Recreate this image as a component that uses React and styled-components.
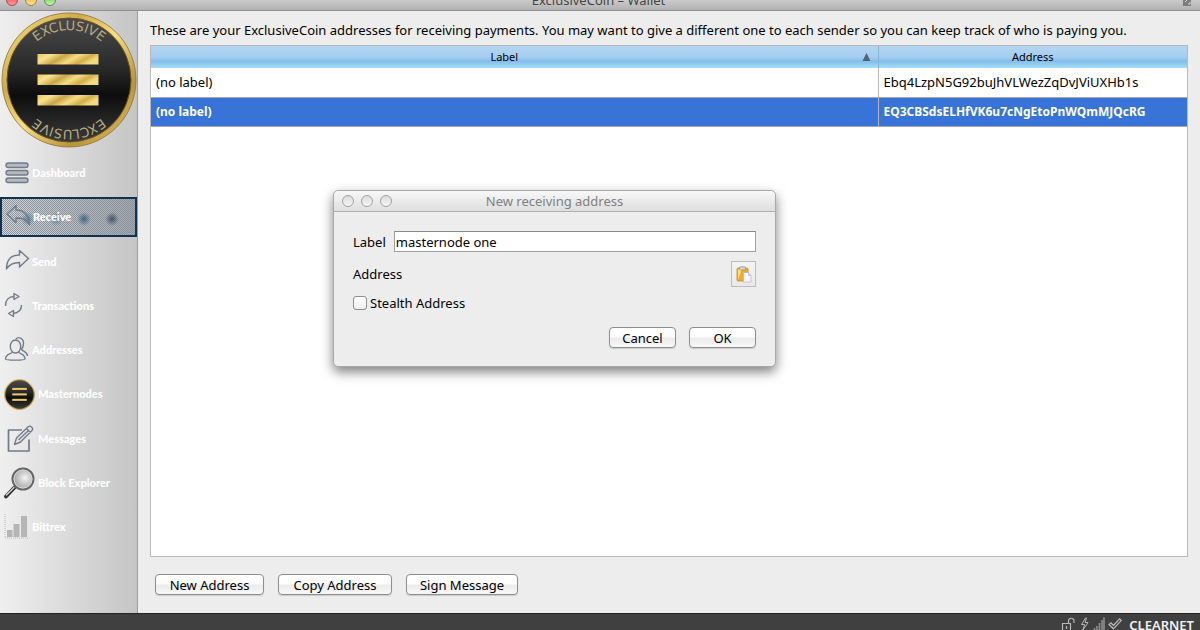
import React, { useState } from "react";
import styled, { createGlobalStyle } from "styled-components";

const GlobalStyle = createGlobalStyle`
  * {
    box-sizing: border-box;
  }

  body {
    margin: 0;
    background: #ededed;
    color: #000;
    font-family: "Noto Sans", "Open Sans", sans-serif;
    font-size: 13px;
    line-height: 18px;
  }

  button,
  input {
    font: inherit;
    color: inherit;
  }
`;

const Window = styled.div`
  position: relative;
  display: grid;
  grid-template-rows: auto 1fr auto;
  min-height: 100vh;
`;

const TitleBar = styled.header`
  display: flex;
  flex-direction: column;
  justify-content: flex-end;
  height: 11px;
  overflow: hidden;
  background: linear-gradient(#cbcbcb, #b2b2b2);
  border-bottom: 1px solid #8f8f8f;
`;

const TitleRow = styled.div`
  display: grid;
  grid-template-columns: 1fr auto 1fr;
  align-items: center;
  flex: none;
  height: 20px;
  padding: 0 9px 0 6px;
`;

const Lights = styled.div`
  display: flex;
  gap: 7px;
`;

const Light = styled.span`
  width: 12px;
  height: 12px;
  border: 1px solid ${({ $edge }) => $edge};
  border-radius: 50%;
  background: ${({ $fill }) => $fill};
`;

const Title = styled.h1`
  margin: 0;
  color: #444;
  font-size: 13px;
  font-weight: 400;
  line-height: 18px;
`;

const ExpandIcon = styled.svg`
  justify-self: end;
  display: block;
`;

const Body = styled.div`
  display: grid;
  grid-template-columns: 138px minmax(0, 1fr);
`;

const Sidebar = styled.aside`
  display: flex;
  flex-direction: column;
  padding-bottom: 66px;
  background: linear-gradient(90deg, #efefef, #c5c5c5);
  border-right: 1px solid #a0a0a0;
`;

const LogoBox = styled.div`
  height: 142px;
  padding: 1px;
`;

const Nav = styled.nav`
  display: flex;
  flex: 1;
  flex-direction: column;
  justify-content: space-between;
`;

const NavLink = styled.a`
  display: flex;
  align-items: center;
  gap: ${({ $wide }) => ($wide ? "3px" : "2px")};
  height: 40px;
  padding-left: 4px;
  color: #fff;
  font-family: Lato, sans-serif;
  font-size: 11px;
  font-weight: 900;
  text-decoration: none;

  svg {
    flex: none;
  }
`;

const ActiveLink = styled(NavLink)`
  padding-left: 3px;
  border: 2px solid #103450;
  background:
    radial-gradient(circle at 82px 20px, #2a5578cc 0, transparent 7px),
    radial-gradient(circle at 110px 20px, #2a4058cc 0, transparent 7px),
    radial-gradient(circle at 54px 20px, #4a789ccc 0, transparent 7px),
    radial-gradient(circle at 26px 20px, #4a789ccc 0, transparent 7px),
    repeating-conic-gradient(#8a939b 0 25%, transparent 0 50%) 0 0 / 2px 2px,
    linear-gradient(90deg, #d6dadd, #a2a7ae);
`;

const Main = styled.main`
  display: flex;
  flex-direction: column;
  padding: 10px 12px 18px;
`;

const Intro = styled.p`
  margin: 0 0 6px;
  white-space: nowrap;
`;

const TablePanel = styled.div`
  flex: 1;
  border: 1px solid #b8b8b8;
  background: #fff;
`;

const AddressTable = styled.table`
  width: 100%;
  border-collapse: collapse;
  table-layout: fixed;
`;

const HeadCell = styled.th`
  width: ${({ $width }) => $width || "auto"};
  height: 22px;
  padding: 0 7px;
  border-right: 1px solid #8db4cf;
  background: linear-gradient(#b3d5f1, #a5ceef 50%, #82beeb 70%, #a9dcf9);
  font-size: 11px;
  font-weight: 400;

  &:last-child {
    border-right: 0;
  }
`;

const HeadContent = styled.div`
  display: grid;
  grid-template-columns: 1fr 20px;
  align-items: center;

  svg {
    justify-self: end;
  }
`;

const Row = styled.tr`
  background: ${({ $selected }) => ($selected ? "#3874d7" : "#fff")};
  color: ${({ $selected }) => ($selected ? "#fff" : "#000")};
  font-size: ${({ $selected }) => ($selected ? "12px" : "13px")};
  font-weight: ${({ $selected }) => ($selected ? 700 : 400)};
`;

const Cell = styled.td`
  height: 29px;
  padding: 0 5px;
  border-right: 1px solid #b5b5b5;
  border-bottom: 1px solid #a8a8a8;

  &:last-child {
    border-right: 0;
  }
`;

const Actions = styled.div`
  display: flex;
  gap: 14px;
  padding: 17px 5px 0;
`;

const PushButton = styled.button`
  height: 21px;
  min-width: ${({ $width }) => $width};
  padding: 0 8px;
  border: 1px solid #8e8e8e;
  border-radius: 4px;
  background: linear-gradient(#fff, #fdfdfd 45%, #ececec 55%, #f7f7f7);
  box-shadow: 0 1px 1px rgba(0, 0, 0, 0.15);
  line-height: 18px;
`;

const StatusBar = styled.footer`
  display: flex;
  justify-content: flex-end;
  align-items: flex-start;
  gap: 3px;
  height: 17px;
  padding: 3px 6px 0 0;
  overflow: hidden;
  border-top: 1px solid #222;
  background: #404040;
  color: #f2f2f2;
  font-weight: 600;

  svg {
    flex: none;
  }
`;

const Network = styled.span`
  padding-left: 3px;
  line-height: 16px;
`;

const Dialog = styled.section`
  position: absolute;
  top: 190px;
  left: 333px;
  width: 443px;
  border: 1px solid #a9a9a9;
  border-radius: 5px;
  background: #ededed;
  box-shadow: 0 5px 12px rgba(0, 0, 0, 0.5);
`;

const DialogBar = styled.header`
  display: grid;
  grid-template-columns: 1fr auto 1fr;
  align-items: center;
  height: 21px;
  padding: 0 8px;
  border-bottom: 1px solid #b0b0b0;
  border-radius: 5px 5px 0 0;
  background: linear-gradient(#f8f8f8, #dedede);
`;

const DialogTitle = styled.h2`
  margin: 0;
  color: #808080;
  font-size: 13px;
  font-weight: 400;
  line-height: 18px;
`;

const Form = styled.form`
  display: grid;
  grid-template-columns: auto 1fr;
  align-items: center;
  column-gap: 8px;
  padding: 19px 19px 18px;
`;

const TextField = styled.input`
  width: 100%;
  height: 21px;
  padding: 0 1px;
  border: 1px solid #a0a0a0;
  border-top-color: #8a8a8a;
  border-radius: 0;
  background: #fff;
  outline: none;
`;

const AddressLine = styled.div`
  display: flex;
  grid-column: 1 / -1;
  justify-content: space-between;
  align-items: center;
  padding-top: 9px;
`;

const PasteButton = styled.button`
  display: grid;
  place-items: center;
  width: 25px;
  height: 26px;
  padding: 0;
  border: 1px solid #bcbcbc;
  background: linear-gradient(#f4f4f4, #e9e9e9);
`;

const CheckLine = styled.label`
  display: flex;
  grid-column: 1 / -1;
  align-items: center;
  gap: 3px;
  padding-top: 7px;
`;

const Checkbox = styled.input`
  appearance: none;
  width: 14px;
  height: 14px;
  margin: 0;
  border: 1px solid #8e8e8e;
  border-radius: 3px;
  background: linear-gradient(#fff, #eee);
`;

const DialogActions = styled.div`
  display: flex;
  grid-column: 1 / -1;
  justify-content: flex-end;
  gap: 13px;
  padding-top: 15px;
`;

const Coin = ({ size, detailed }) => (
  <svg width={size} height={size} viewBox="0 0 136 136" aria-hidden="true">
    <defs>
      <linearGradient id="gold" x1="0" y1="0" x2="1" y2="1">
        <stop offset="0" stopColor="#fbe596" />
        <stop offset="0.3" stopColor="#d0ab48" />
        <stop offset="0.5" stopColor="#f8de88" />
        <stop offset="0.75" stopColor="#b8943a" />
        <stop offset="1" stopColor="#e9c866" />
      </linearGradient>
      <linearGradient id="bar" x1="0" y1="0" x2="1" y2="0.3">
        <stop offset="0" stopColor="#e8c860" />
        <stop offset="0.22" stopColor="#f9e38f" />
        <stop offset="0.45" stopColor="#c9a648" />
        <stop offset="0.65" stopColor="#f6dd86" />
        <stop offset="0.85" stopColor="#d2ae4a" />
        <stop offset="1" stopColor="#f3d980" />
      </linearGradient>
      <linearGradient id="face" x1="0" y1="0" x2="0" y2="1">
        <stop offset="0" stopColor="#4a4a4a" />
        <stop offset="0.4" stopColor="#2a2a2a" />
        <stop offset="0.62" stopColor="#0d0d0d" />
        <stop offset="1" stopColor="#3a3a3a" />
      </linearGradient>
      <path id="arcTop" d="M18 68 A50 50 0 0 1 118 68" />
      <path id="arcBottom" d="M118 68 A50 50 0 0 1 18 68" />
    </defs>
    <circle cx="68" cy="68" r="67" fill="url(#gold)" stroke="#8b7434" strokeWidth="0.8" />
    <circle cx="68" cy="68" r="62" fill="url(#face)" stroke="#6b5420" />
    {detailed ? (
      <>
        <g fill="url(#bar)">
          <rect x="36.500" y="42" width="61" height="10.500" />
          <rect x="36.500" y="62.500" width="61" height="10.500" />
          <rect x="36.500" y="83" width="61" height="10.500" />
        </g>
        <g fill="#b9ab80" fontFamily="DejaVu Sans, sans-serif" fontSize="13" textAnchor="middle">
          <text>
            <textPath href="#arcTop" startOffset="50%">EXCLUSIVE</textPath>
          </text>
          <text>
            <textPath href="#arcBottom" startOffset="50%">EXCLUSIVE</textPath>
          </text>
        </g>
      </>
    ) : (
      <g fill="#e5c768">
        <rect x="36" y="39" width="64" height="9" />
        <rect x="36" y="63" width="64" height="9" />
        <rect x="36" y="87" width="64" height="9" />
      </g>
    )}
  </svg>
);

const LineIcon = ({ width = 26, children }) => (
  <svg width={width} height="28" viewBox={`0 0 ${width} 28`} fill="none" stroke="#747a88" strokeWidth="1.4" strokeLinejoin="round" aria-hidden="true">
    {children}
  </svg>
);

const DashboardIcon = () => (
  <LineIcon>
    <g fill="#b4b9c2">
      <rect x="2" y="4" width="22" height="4.5" rx="2.2" />
      <rect x="2" y="11.5" width="22" height="4.5" rx="2.2" />
      <rect x="2" y="19" width="22" height="4.5" rx="2.2" />
    </g>
  </LineIcon>
);

const ReceiveIcon = () => (
  <LineIcon>
    <path d="M2 11 L11 2.500 V7 C19 7 24 12 24.500 21.500 C21 16 17 15 11 15 V19.500 Z" />
  </LineIcon>
);

const SendIcon = () => (
  <LineIcon>
    <path d="M24.500 10.500 L15.500 2.500 V7 C7 7 2.500 11.500 2.500 21 C5.500 16 9 14.500 15.500 14.500 V19 Z" />
  </LineIcon>
);

const TransactionsIcon = () => (
  <LineIcon>
    <path d="M1.500 14 C1.500 8 5 4.500 10 4.500 M17.500 13 C17.500 18 14.500 21 9 21.500" />
    <path d="M10 1.500 L15 4.500 L10 7.500 Z M9.500 18.500 L4.500 21.500 L9.500 24.500 Z" />
  </LineIcon>
);

const AddressesIcon = () => (
  <LineIcon>
    <ellipse cx="11.500" cy="10.500" rx="5.200" ry="6.500" />
    <path d="M8.500 16 C7 18.500 1.500 17.500 1.500 23 C1.500 24.500 21 24.500 21 23 C21 17.500 16 18.500 14.500 16" />
    <path d="M12 3 C14 0.500 19.500 1.500 19.500 7.500 C19.500 10.500 18.500 12 17.500 13.500 C18.500 15.500 23.500 15.500 23.500 20" />
  </LineIcon>
);

const MessagesIcon = () => (
  <LineIcon width={31}>
    <path d="M18 5 H4.500 V26 H25 V14.500" strokeWidth="1.700" />
    <path d="M10.500 19.500 L12.500 13 L24.500 1.500 Q26 0.500 27.500 2 Q29.500 4 28 5.500 L16.500 17 Z M22.500 3.500 L26.500 7.500 M14.500 15 L24.500 5.500" />
  </LineIcon>
);

const ExplorerIcon = () => (
  <svg width="31" height="32" viewBox="0 0 31 32" aria-hidden="true">
    <defs>
      <radialGradient id="lens" cx="0.6" cy="0.45">
        <stop offset="0" stopColor="#f4f4f4" />
        <stop offset="1" stopColor="#ababab" />
      </radialGradient>
    </defs>
    <path d="M2 29.500 L10 21" stroke="#333" strokeWidth="3.800" strokeLinecap="round" />
    <path d="M2.500 28 L10 20.500" stroke="#d8d8d8" strokeWidth="1.300" strokeLinecap="round" />
    <circle cx="19" cy="12" r="10.500" fill="url(#lens)" stroke="#666" strokeWidth="2" />
    <circle cx="19" cy="12" r="9" fill="none" stroke="#d9d9d9" />
  </svg>
);

const BittrexIcon = () => (
  <svg width="26" height="28" viewBox="0 0 26 28" fill="#b5b5b5" aria-hidden="true">
    <path d="M3 17h5.500v7H3z M9.500 11h6v13h-6z M17 3h6v21h-6z" />
    <path d="M1 1v24h23" fill="none" stroke="#b9b9b9" strokeDasharray="1 1" />
  </svg>
);

const PasteIcon = () => (
  <svg width="16" height="17" viewBox="0 0 16 17" aria-hidden="true">
    <rect x="1" y="2" width="11" height="13" rx="1" fill="#f0a92b" stroke="#c98a22" strokeWidth="0.8" />
    <path d="M2 14V3h4z" fill="#fbdc78" />
    <rect x="3.500" y="0.800" width="6" height="3.200" rx="1" fill="#d5d5d5" stroke="#8d8d8d" strokeWidth="0.700" />
    <path d="M7.500 6.500h5l2.500 3V16H7.500z" fill="#f7f7fc" stroke="#b9b9cb" strokeWidth="0.800" />
    <path d="M12.500 6.500v3H15" fill="none" stroke="#b9b9cb" strokeWidth="0.800" />
  </svg>
);

const StatusIcons = () => (
  <svg width="62" height="14" viewBox="0 0 62 14" fill="none" stroke="#b8b8b8" strokeWidth="1.200" aria-hidden="true">
    <path d="M1.500 6.500h8v8h-8z M7.500 6.500V3.500a2.800 2.800 0 0 1 5.500 0V6 M5.500 9v3" />
    <path d="M24.500 1 L20.500 7.500 H23.500 L22 13 L27 5.500 H24 L25.500 1 Z" strokeWidth="1" />
    <path d="M33.500 11v3 M36 9v5 M38.500 6v8 M41 3v11 M43 0.500v13.500" stroke="#8e8e8e" strokeWidth="1.600" />
    <path d="M48 7.500 L50 5.800 L52.500 8.500 L58.500 1.800 L60.300 3.300 L52.500 11.800 Z" />
  </svg>
);

const navItems = [
  { name: "Dashboard", icon: <DashboardIcon /> },
  { name: "Receive", icon: <ReceiveIcon />, active: true },
  { name: "Send", icon: <SendIcon /> },
  { name: "Transactions", icon: <TransactionsIcon /> },
  { name: "Addresses", icon: <AddressesIcon /> },
  { name: "Masternodes", icon: <Coin size={31} />, wide: true },
  { name: "Messages", icon: <MessagesIcon />, wide: true },
  { name: "Block Explorer", icon: <ExplorerIcon />, wide: true },
  { name: "Bittrex", icon: <BittrexIcon /> },
];

const addresses = [
  { label: "(no label)", address: "Ebq4LzpN5G92buJhVLWezZqDvJViUXHb1s" },
  { label: "(no label)", address: "EQ3CBSdsELHfVK6u7cNgEtoPnWQmMJQcRG" },
];

const hollow = { $edge: "#a2a2a2", $fill: "linear-gradient(#dcdcdc, #f6f6f6)" };

function NewAddressDialog() {
  const [label, setLabel] = useState("masternode one");

  return (
    <Dialog role="dialog" aria-labelledby="dialog-title">
      <DialogBar>
        <Lights>
          <Light {...hollow} />
          <Light {...hollow} />
          <Light {...hollow} />
        </Lights>
        <DialogTitle id="dialog-title">New receiving address</DialogTitle>
      </DialogBar>
      <Form onSubmit={(e) => e.preventDefault()}>
        <label htmlFor="label">Label</label>
        <TextField id="label" value={label} onChange={(e) => setLabel(e.target.value)} />
        <AddressLine>
          <span>Address</span>
          <PasteButton type="button" aria-label="Paste address">
            <PasteIcon />
          </PasteButton>
        </AddressLine>
        <CheckLine>
          <Checkbox type="checkbox" />
          Stealth Address
        </CheckLine>
        <DialogActions>
          <PushButton type="button" $width="67px">Cancel</PushButton>
          <PushButton type="submit" $width="67px">OK</PushButton>
        </DialogActions>
      </Form>
    </Dialog>
  );
}

export default function App() {
  return (
    <>
      <GlobalStyle />
      <Window>
        <TitleBar>
          <TitleRow>
            <Lights>
              <Light $edge="#a8474a" $fill="linear-gradient(#e0444a, #ff9a98)" />
              <Light $edge="#a9803c" $fill="linear-gradient(#f0b040, #ffe08a)" />
              <Light $edge="#5c9150" $fill="linear-gradient(#6cc050, #c0f5a0)" />
            </Lights>
            <Title>ExclusiveCoin – Wallet</Title>
            <ExpandIcon width="8" height="12" viewBox="0 0 8 12" aria-hidden="true">
              <path d="M0 0h8v12H0z" fill="#7c7c7c" />
              <path d="M2 8l4-4 M5 10h2V8" fill="none" stroke="#d8d8d8" />
            </ExpandIcon>
          </TitleRow>
        </TitleBar>
        <Body>
          <Sidebar>
            <LogoBox>
              <Coin size={136} detailed />
            </LogoBox>
            <Nav>
              {navItems.map(({ name, icon, active, wide }) => {
                const Item = active ? ActiveLink : NavLink;
                return (
                  <Item key={name} href="#" $wide={wide} aria-current={active ? "page" : undefined}>
                    {icon}
                    {name}
                  </Item>
                );
              })}
            </Nav>
          </Sidebar>
          <Main>
            <Intro>
              These are your ExclusiveCoin addresses for receiving payments. You may want to give a different one to each sender so you can keep track of who is paying you.
            </Intro>
            <TablePanel>
              <AddressTable>
                <thead>
                  <tr>
                    <HeadCell>
                      <HeadContent>
                        Label
                        <svg width="9" height="8" viewBox="0 0 9 8" aria-hidden="true">
                          <path d="M4.500 0 L8.500 8 H0.500 Z" fill="#4d6578" />
                        </svg>
                      </HeadContent>
                    </HeadCell>
                    <HeadCell $width="309px">Address</HeadCell>
                  </tr>
                </thead>
                <tbody>
                  {addresses.map(({ label, address }, i) => (
                    <Row key={address} $selected={i === 1}>
                      <Cell>{label}</Cell>
                      <Cell>{address}</Cell>
                    </Row>
                  ))}
                </tbody>
              </AddressTable>
            </TablePanel>
            <Actions>
              <PushButton type="button" $width="109px">New Address</PushButton>
              <PushButton type="button" $width="114px">Copy Address</PushButton>
              <PushButton type="button" $width="112px">Sign Message</PushButton>
            </Actions>
          </Main>
        </Body>
        <StatusBar>
          <StatusIcons />
          <Network>CLEARNET</Network>
        </StatusBar>
        <NewAddressDialog />
      </Window>
    </>
  );
}
